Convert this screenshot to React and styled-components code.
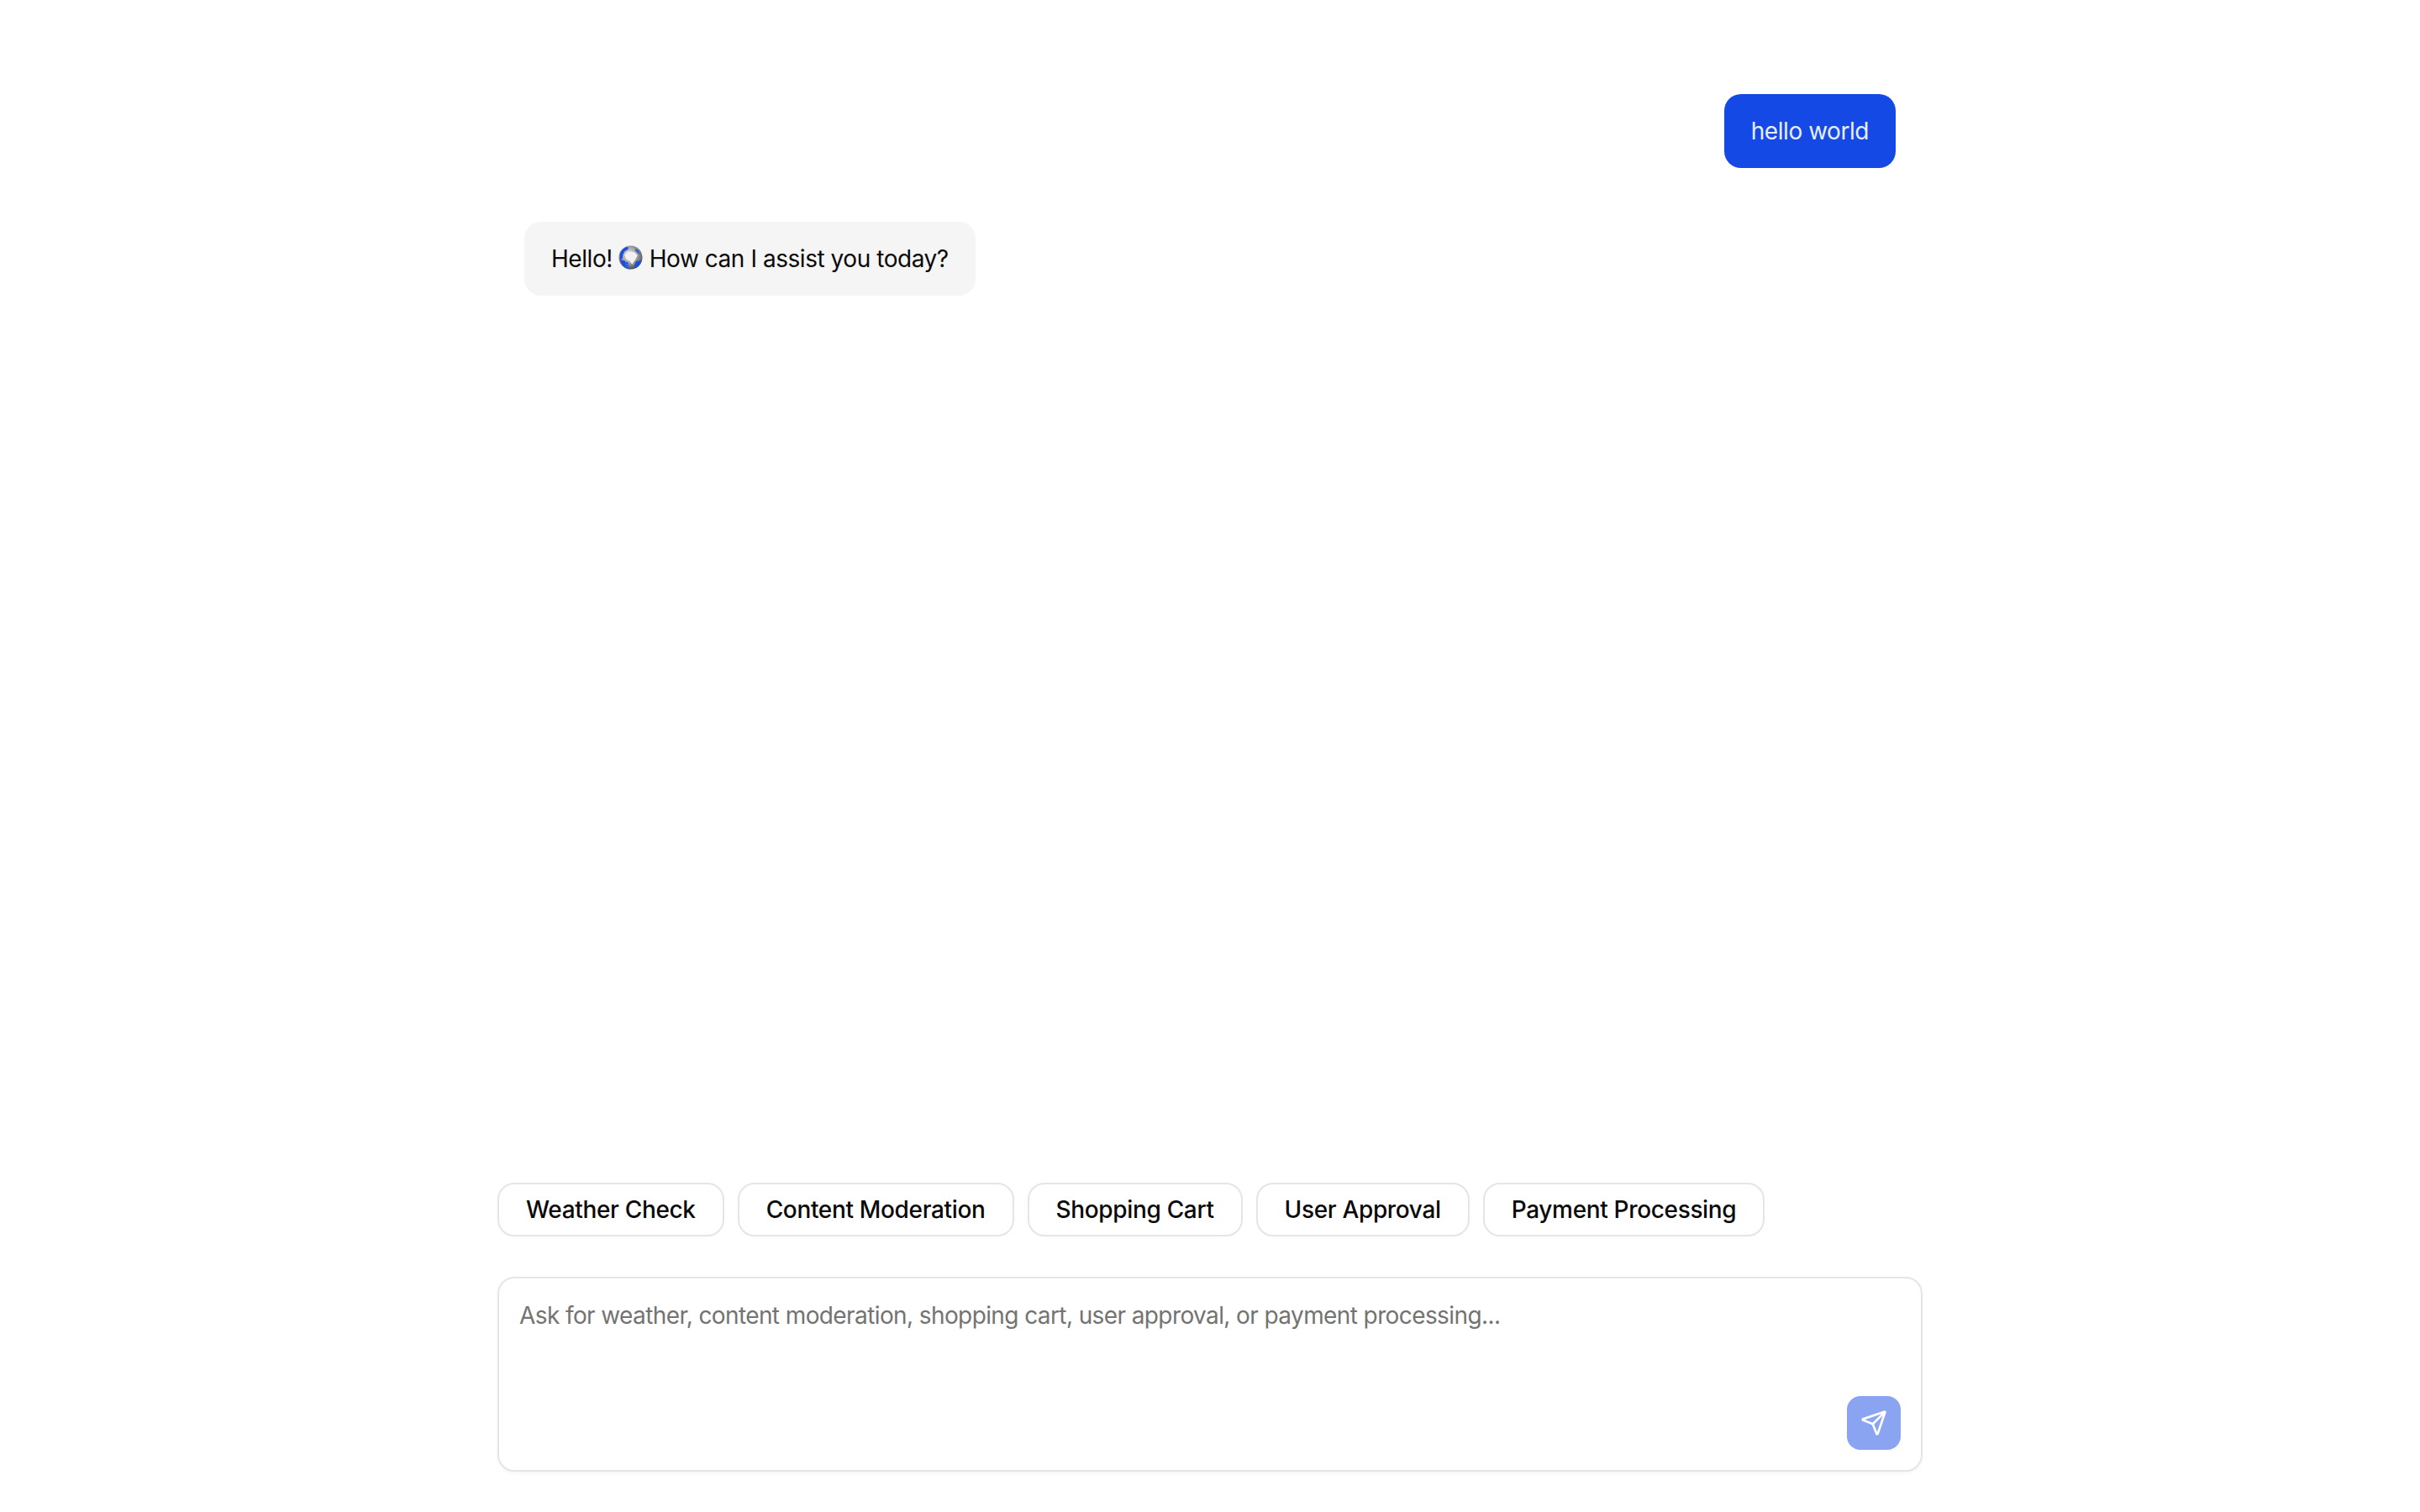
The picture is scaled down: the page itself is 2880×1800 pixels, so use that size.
import React from 'react';
import styled, { createGlobalStyle } from 'styled-components';
import { Send } from 'lucide-react';

const suggestions = ['Weather Check', 'Content Moderation', 'Shopping Cart', 'User Approval', 'Payment Processing'];

function Globe() {
  return (
    <GlobeIcon viewBox="0 0 32 32" aria-hidden="true">
      <defs>
        <radialGradient id="globeLand" cx="45%" cy="40%" r="62%">
          <stop offset="0%" stopColor="#f0f0f0" />
          <stop offset="50%" stopColor="#a8a8a8" />
          <stop offset="85%" stopColor="#6a6a6a" />
          <stop offset="100%" stopColor="#333" />
        </radialGradient>
        <pattern id="globeDots" width="3" height="3" patternUnits="userSpaceOnUse">
          <rect width="3" height="3" fill="#1c4fe0" />
          <rect width="1.4" height="1.4" fill="#9fb2ea" />
        </pattern>
      </defs>
      <circle cx="16" cy="16" r="15.5" fill="url(#globeLand)" />
      <path d="M2 12c1-5 5-9 10-10l1 3-5 3-2 4-1 6-3 1z" fill="#1c4fe0" />
      <path d="M2 19l6 1 4 4 3 7.4C9 31 4 26 2 19z" fill="#1c4fe0" />
      <path d="M9 21l4 2 2 8-5-2z" fill="url(#globeDots)" />
      <path d="M23 21l6-1 1.5-1c-1 4-3 8-7 10.500l-3-1z" fill="#1c4fe0" />
      <path d="M22 4l4 3 3 5-4-2-3-3z" fill="#1c4fe0" opacity=".8" />
      <path d="M8 12l5-4 8 1 4 4-3 6-4 6-3-4-5-3z" fill="#f1f1f1" />
    </GlobeIcon>
  );
}

export default function App() {
  return (
    <Page>
      <GlobalStyle />
      <Messages>
        <UserBubble>hello world</UserBubble>
        <AssistantBubble>
          Hello! <Globe /> How can I assist you today?
        </AssistantBubble>
      </Messages>
      <Suggestions>
        {suggestions.map((label) => (
          <Chip key={label}>{label}</Chip>
        ))}
      </Suggestions>
      <InputBox>
        <Prompt placeholder="Ask for weather, content moderation, shopping cart, user approval, or payment processing..." />
        <SendButton>
          <Send size={32} strokeWidth={2} color="#fff" />
        </SendButton>
      </InputBox>
    </Page>
  );
}

const GlobalStyle = createGlobalStyle`
  html, body {
    margin: 0;
    background: #fff;
  }
  * {
    box-sizing: border-box;
  }
`;

const Page = styled.div`
  width: 1696px;
  height: 1800px;
  margin: 0 auto;
  padding-bottom: 48px;
  display: flex;
  flex-direction: column;
  font-family: Inter, 'Liberation Sans', sans-serif;
  font-size: 28px;
  line-height: 40px;
  letter-spacing: -0.45px;
  color: #0a0a0a;
`;

const Messages = styled.div`
  flex: 1;
  padding: 112px 32px 0;
  display: flex;
  flex-direction: column;
  gap: 64px;
`;

const UserBubble = styled.div`
  align-self: flex-end;
  padding: 24px 32px;
  border-radius: 20px;
  background: #1549e6;
  color: #e8edfd;
`;

const AssistantBubble = styled.div`
  align-self: flex-start;
  padding: 24px 32px;
  border-radius: 20px;
  background: #f5f5f5;
`;

const GlobeIcon = styled.svg`
  width: 29px;
  height: 29px;
  vertical-align: -3px;
`;

const Suggestions = styled.div`
  display: flex;
  gap: 16px;
  margin-bottom: 48px;
`;

const Chip = styled.button`
  height: 64px;
  padding: 0 32px;
  border: 2px solid #e5e5e5;
  border-radius: 20px;
  background: #fff;
  font: inherit;
  font-weight: 500;
  letter-spacing: -0.34px;
  color: #0a0a0a;
`;

const InputBox = styled.div`
  position: relative;
  height: 232px;
  border: 2px solid #e5e5e5;
  border-radius: 20px;
  background: #fff;
  box-shadow: 0 2px 4px rgba(0, 0, 0, 0.04);
`;

const Prompt = styled.textarea`
  display: block;
  width: 100%;
  height: 100%;
  padding: 24px;
  border: 0;
  outline: 0;
  resize: none;
  background: transparent;
  font: inherit;
  letter-spacing: -0.6px;
  color: #0a0a0a;

  &::placeholder {
    color: #737373;
    opacity: 1;
  }
`;

const SendButton = styled.button`
  position: absolute;
  right: 24px;
  bottom: 24px;
  width: 64px;
  height: 64px;
  padding: 0;
  border: 0;
  border-radius: 16px;
  background: #8aa4f2;
  display: flex;
  align-items: center;
  justify-content: center;
`;
